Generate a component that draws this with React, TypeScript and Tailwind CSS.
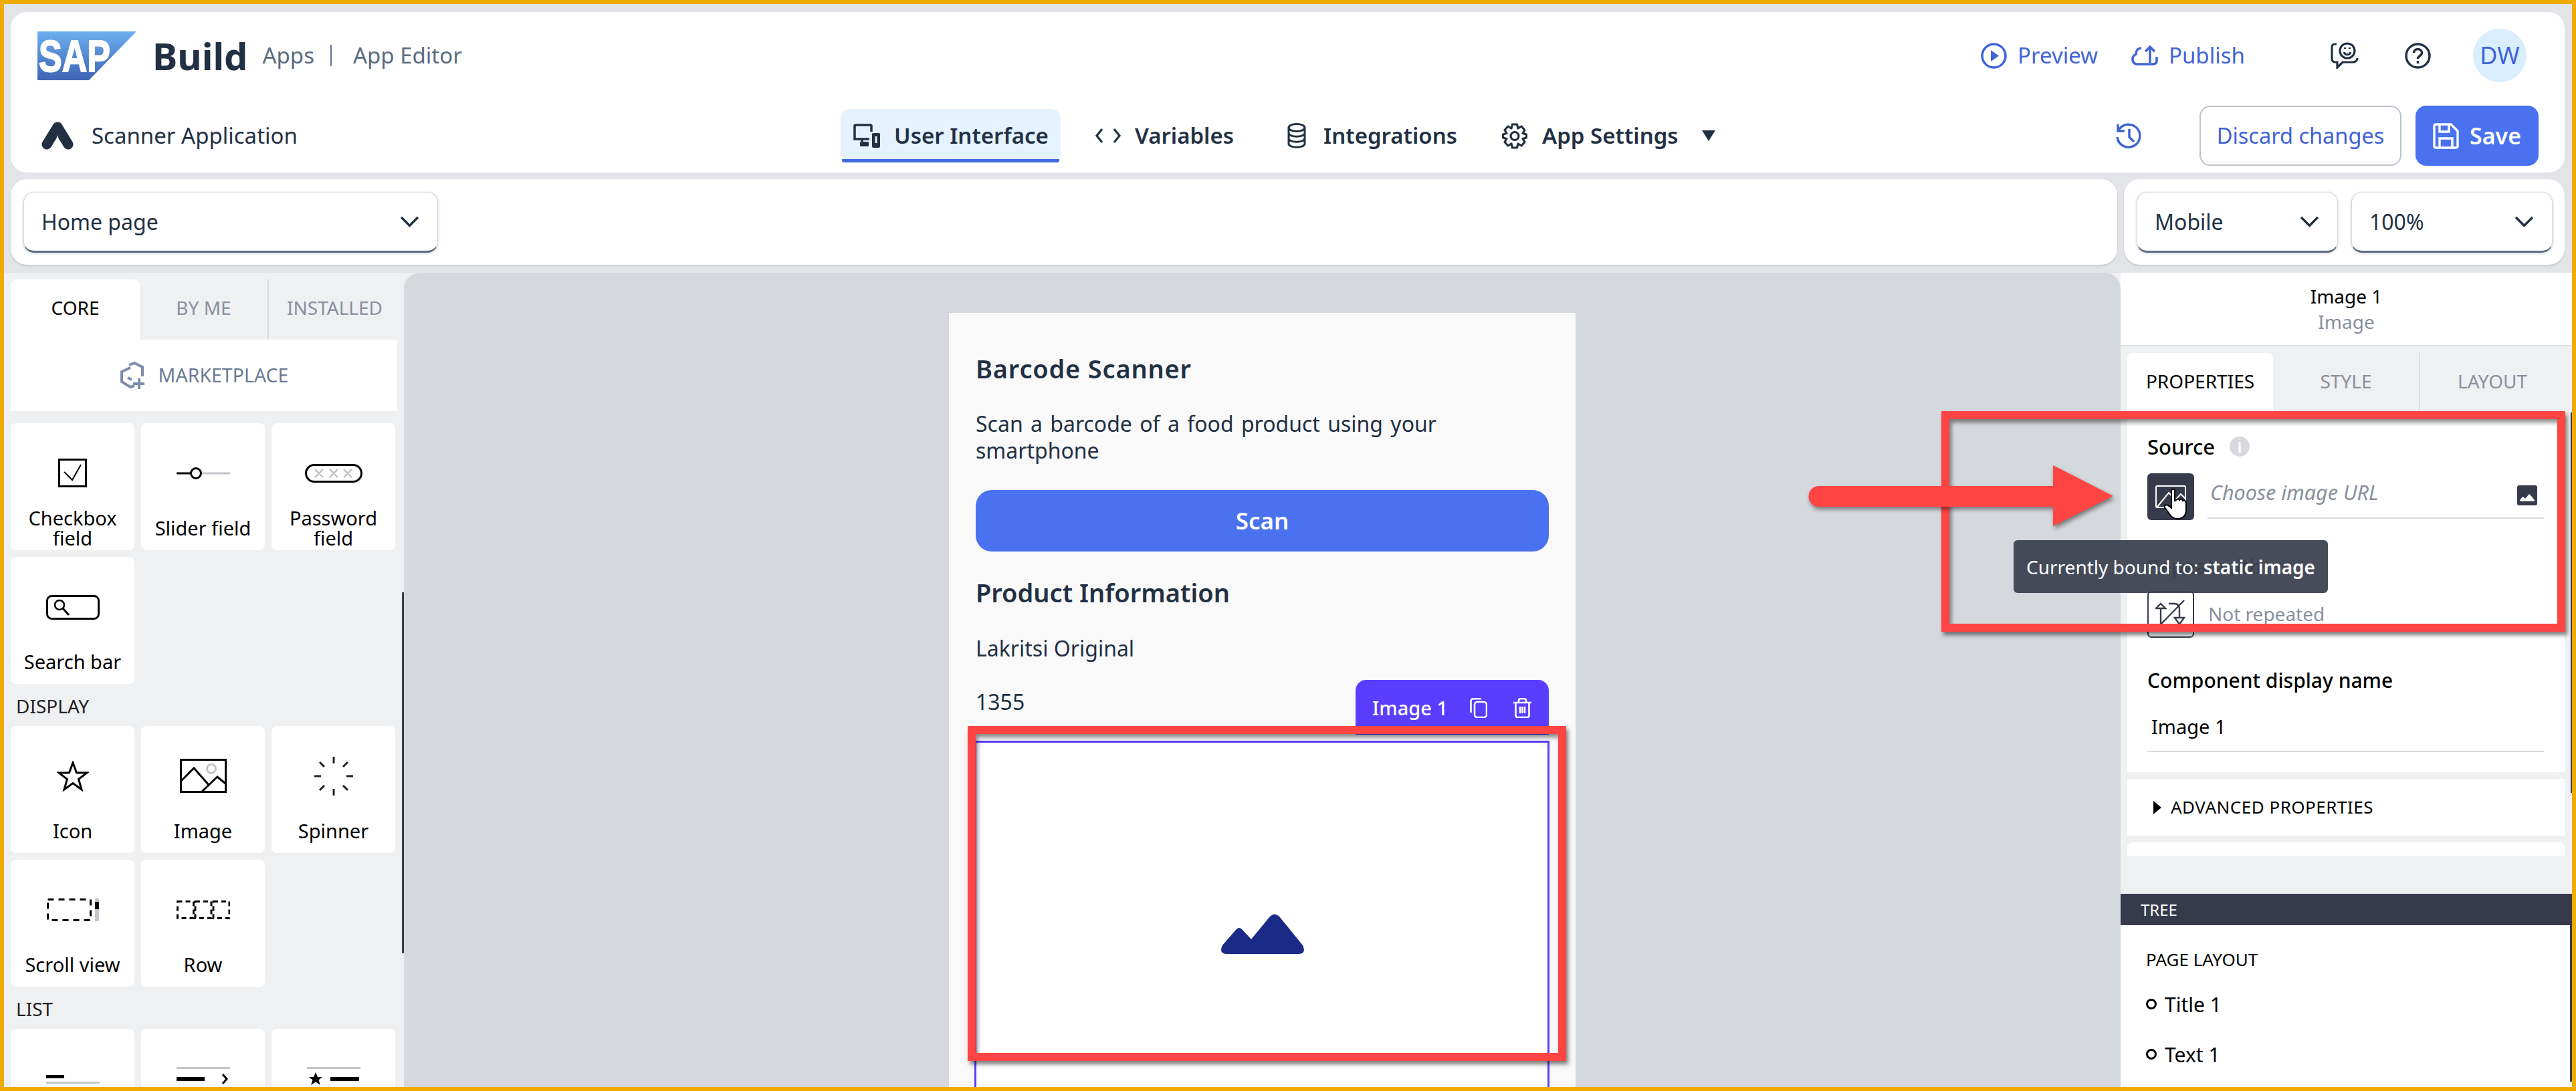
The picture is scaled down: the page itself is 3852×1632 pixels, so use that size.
import React from "react";

const INK = "#223044";

function Chevron() {
  return (
    <svg width="29" height="17" viewBox="0 0 29 17" fill="none" stroke="#223044" strokeWidth="3.4">
      <path d="M2 2 L14.5 14.5 L27 2" />
    </svg>
  );
}

function Select({ label, width }: { label: string; width: string }) {
  return (
    <div className={`flex h-[91px] items-center justify-between rounded-[16px] border border-b-[3px] border-[#d3d6dc] border-b-[#5b6b7e] bg-white pl-[26px] pr-[27px] shadow-[0_1px_4px_rgba(0,0,0,0.18)] ${width}`}>
      <span className="pt-[2px] text-[32px] text-[#223044]">{label}</span>
      <Chevron />
    </div>
  );
}

function Card({ label, children }: { label: React.ReactNode; children?: React.ReactNode }) {
  return (
    <div className="flex h-[190px] flex-col items-center rounded-[8px] bg-white">
      <div className="flex h-[126px] w-full items-center justify-center pt-[24px]">{children}</div>
      <div className="flex h-[62px] items-center text-center text-[29px] leading-[30px] text-black">{label}</div>
    </div>
  );
}

function SectionLabel({ text }: { text: string }) {
  return <div className="flex h-[63px] items-center pl-[8px] pt-[2px] text-[28px] text-[#222]">{text}</div>;
}

function SapLogo() {
  return (
    <svg width="148" height="73" viewBox="0 0 148 73">
      <defs>
        <linearGradient id="sapg" x1="0" y1="0" x2="0" y2="1">
          <stop offset="0" stopColor="#6cb0f0" />
          <stop offset="1" stopColor="#3f64b4" />
        </linearGradient>
      </defs>
      <polygon points="0,0 148,0 77,73 0,73" fill="url(#sapg)" />
      <text x="2" y="60" fontFamily="Liberation Sans" fontWeight="700" fontSize="66" fill="#fff" textLength="107" lengthAdjust="spacingAndGlyphs" stroke="#fff" strokeWidth="2">SAP</text>
    </svg>
  );
}

function AppMark() {
  return (
    <svg width="48" height="42" viewBox="0 0 48 42">
      <path d="M8 34 L24 8 L40 34" fill="none" stroke="#223044" strokeWidth="15" strokeLinecap="round" strokeLinejoin="round" />
      <path d="M24 20 L18 42 L30 42 Z" fill="#fff" />
    </svg>
  );
}

function Mountains({ className, fill = "#1b2a86" }: { className?: string; fill?: string }) {
  return (
    <svg className={className} viewBox="0 0 124 60">
      <path d="M2 47 L22 24 Q27 18 32 24 L45 38 L73 4 Q80 -3 87 4 L122 47 Q128 60 115 60 H9 Q-4 60 2 47 Z" fill={fill} />
    </svg>
  );
}

function MainArea() {
  return (
    <div className="flex min-h-0 flex-1 bg-[#eff0f2]">
      <LeftPanel />
      <div className="flex w-[2567px] justify-center overflow-hidden rounded-t-[24px] bg-[#d5d8dc] pt-[60px]">
        <Phone />
      </div>
      <RightPanel />
    </div>
  );
}

function LeftPanel() {
  return (
    <div className="relative w-[598px] overflow-hidden bg-[#eff0f2] pl-[10px] pt-[10px]">
      <div className="flex h-[90px] w-[588px] text-[28px]">
        <div className="flex w-[193px] items-start justify-center rounded-t-[8px] bg-white pt-[21px] text-black">CORE</div>
        <div className="flex w-[193px] items-start justify-center border-r-2 border-[#d8dade] pt-[21px] text-[#8a8f9c]">BY ME</div>
        <div className="flex w-[197px] items-start justify-center pt-[21px] text-[#8a8f9c]">INSTALLED</div>
      </div>
      <div className="flex h-[107px] w-[578px] items-center justify-center gap-[20px] bg-white text-[28.5px] text-[#6b7a94]">
        <svg width="38" height="42" viewBox="0 0 38 42" fill="none" stroke="#7d8dab" strokeWidth="4">
          <path d="M16 9 L3 15 V30 L16 38 L22 36" />
          <path d="M14 5 L22 2 L34 8 V22" />
          <path d="M12 24 L18 27" />
          <path d="M20 33 H37 M29 25 V41" />
        </svg>
        <span>MARKETPLACE</span>
      </div>
      <div className="mt-[18px] grid w-[575px] grid-cols-[185px_185px_185px] gap-[10px]">
        <Card label={<>Checkbox<br />field</>}>
          <svg width="44" height="44" viewBox="0 0 44 44" fill="none" stroke="#000">
            <rect x="1.5" y="1.5" width="40" height="40" strokeWidth="3" />
            <path d="M9 20 L21 32 L34 9" strokeWidth="2" />
          </svg>
        </Card>
        <Card label="Slider field">
          <svg width="80" height="20" viewBox="0 0 80 20" fill="none">
            <path d="M38 10 H80" stroke="#c4c5ca" strokeWidth="3" />
            <path d="M0 10 H22" stroke="#000" strokeWidth="3" />
            <circle cx="29" cy="10" r="7.5" stroke="#000" strokeWidth="3" />
          </svg>
        </Card>
        <Card label={<>Password<br />field</>}>
          <svg width="86" height="28" viewBox="0 0 86 28" fill="none">
            <rect x="1.5" y="1.5" width="83" height="25" rx="12.5" stroke="#000" strokeWidth="3" />
            <path d="M15 8 L27 20 M27 8 L15 20 M37 8 L49 20 M49 8 L37 20 M58 8 L70 20 M70 8 L58 20" stroke="#c4c5ca" strokeWidth="2.5" />
          </svg>
        </Card>
        <Card label="Search bar">
          <svg width="80" height="37" viewBox="0 0 80 37" fill="none" stroke="#000">
            <rect x="1.5" y="1.5" width="77" height="34" rx="7" strokeWidth="3" />
            <circle cx="20" cy="15" r="7" strokeWidth="2.5" />
            <path d="M25 20 L34 30" strokeWidth="3" />
          </svg>
        </Card>
      </div>
      <SectionLabel text="DISPLAY" />
      <div className="grid w-[575px] grid-cols-[185px_185px_185px] gap-[10px]">
        <Card label="Icon">
          <svg width="48" height="46" viewBox="0 0 48 46" fill="none" stroke="#000" strokeWidth="3">
            <path d="M24 3 L29.5 18 H45 L32.5 27.5 L37 43 L24 33.5 L11 43 L15.5 27.5 L3 18 H18.5 Z" />
          </svg>
        </Card>
        <Card label="Image">
          <svg width="70" height="52" viewBox="0 0 70 52" fill="none">
            <rect x="1.5" y="1.5" width="67" height="48" stroke="#000" strokeWidth="3" />
            <path d="M2 33 L21 14 L43 39 M33 49 L56 27 L68 37" stroke="#000" strokeWidth="3" />
            <circle cx="47" cy="15" r="6.5" stroke="#c4c5ca" strokeWidth="3" />
          </svg>
        </Card>
        <Card label="Spinner">
          <svg width="58" height="58" viewBox="0 0 58 58" stroke="#222" strokeWidth="3" fill="none">
            <path d="M29 0 V10 M29 48 V58 M0 29 H10 M48 29 H58 M8 8 L15 15 M50 8 L43 15 M8 50 L15 43 M50 50 L43 43" />
          </svg>
        </Card>
        <Card label="Scroll view">
          <svg width="78" height="34" viewBox="0 0 78 34" fill="none">
            <rect x="1.5" y="1.5" width="64" height="31" stroke="#000" strokeWidth="3" strokeDasharray="9 7" />
            <rect x="72" y="0" width="6" height="34" fill="#c4c5ca" />
            <rect x="72" y="5" width="6" height="11" fill="#000" />
          </svg>
        </Card>
        <Card label="Row">
          <svg width="80" height="28" viewBox="0 0 80 28" fill="none" stroke="#000" strokeWidth="3" strokeDasharray="7 5">
            <rect x="1.5" y="1.5" width="24" height="25" />
            <rect x="28" y="1.5" width="24" height="25" />
            <rect x="55" y="1.5" width="24" height="25" />
          </svg>
        </Card>
      </div>
      <SectionLabel text="LIST" />
      <div className="grid w-[575px] grid-cols-[185px_185px_185px] gap-[10px]">
        <Card label="">
          <svg className="mt-[16px]" width="80" height="28" viewBox="0 0 80 28">
            <rect x="0" y="0" width="27" height="5" fill="#000" />
            <rect x="0" y="10" width="80" height="3" fill="#c4c5ca" />
          </svg>
        </Card>
        <Card label="">
          <svg className="mt-[-6px]" width="80" height="30" viewBox="0 0 80 30" fill="none">
            <rect x="0" y="0" width="80" height="3" fill="#c4c5ca" />
            <rect x="0" y="15" width="42" height="6" fill="#000" />
            <path d="M69 11 L75 18 L69 25" stroke="#000" strokeWidth="3" />
          </svg>
        </Card>
        <Card label="">
          <svg className="mt-[-6px]" width="80" height="30" viewBox="0 0 80 30" fill="none">
            <rect x="0" y="0" width="80" height="3" fill="#c4c5ca" />
            <path d="M13 8 L16 15 H23 L17.5 19.5 L20 27 L13 22.5 L6 27 L8.5 19.5 L3 15 H10 Z" fill="#000" />
            <rect x="35" y="15" width="43" height="6" fill="#000" />
          </svg>
        </Card>
      </div>
      <div className="absolute right-0 top-[478px] h-[540px] w-[3px] bg-[#363a4b]" />
    </div>
  );
}

function Phone() {
  return (
    <div className="h-[1200px] w-[937px] bg-[#f9f9f9] px-[40px] pt-[60px] text-[#223044]">
      <div className="h-[46px] text-[38px] font-semibold leading-[46px] tracking-[0.8px]">Barcode Scanner</div>
      <p className="mt-[40px] text-[32px] leading-[40px] [word-spacing:3px]">
        Scan a barcode of a food product using your<br />smartphone
      </p>
      <div className="mt-[39px] flex h-[92px] items-center justify-center rounded-[24px] bg-[#4a72f0] text-[35px] font-semibold text-white">Scan</div>
      <div className="mt-[38px] h-[46px] text-[38px] font-semibold leading-[46px]">Product Information</div>
      <div className="mt-[41px] h-[40px] text-[32px] leading-[40px]">Lakritsi Original</div>
      <div className="mt-[40px] h-[40px] text-[32px] leading-[40px]">1355</div>
      <div className="relative ml-[-2px] mr-[-1px] mt-[38px] h-[600px] border-[3px] border-[#5a3dff] pl-[2px]">
        <div className="absolute right-[-2px] top-[-94px] flex h-[82px] w-[289px] items-center rounded-t-[16px] bg-[#5a3dff] pl-[25px] pt-[2px] text-white">
          <span className="w-[146px] text-[29px] font-medium">Image 1</span>
          <svg width="26" height="30" viewBox="0 0 26 30" fill="none" stroke="#fff" strokeWidth="2.6">
            <path d="M1.5 22 V5 C1.5 2.5 3 1.3 5 1.3 H17" />
            <rect x="7" y="6" width="18" height="23" rx="4" />
          </svg>
          <svg className="ml-[39px]" width="27" height="30" viewBox="0 0 27 30" fill="none" stroke="#fff" strokeWidth="2.6">
            <path d="M0 7 H27 M8 7 V4 C8 2 9 1.3 11 1.3 H16 C18 1.3 19 2 19 4 V7 M3.5 7 V26 C3.5 28 5 29 6.5 29 H20.5 C22 29 23.5 28 23.5 26 V7 M10 13 V23 M13.5 13 V23 M17 13 V23" />
          </svg>
        </div>
        <div className="flex h-full justify-center rounded-[20px] bg-white pt-[256px]">
          <Mountains className="h-[60px] w-[124px]" />
        </div>
      </div>
    </div>
  );
}

function RightPanel() {
  return (
    <div className="relative flex w-[675px] flex-col bg-[#eff0f2]">
      <div className="flex h-[110px] flex-col items-center border-b-2 border-[#dcdde1] bg-white pt-[16px]">
        <div className="text-[28px] leading-[38px] text-black">Image 1</div>
        <div className="text-[28px] leading-[38px] text-[#8a8f9c]">Image</div>
      </div>
      <div className="mt-[10px] flex h-[87px] pl-[10px] text-[28px]">
        <div className="flex w-[218px] justify-center rounded-t-[8px] bg-white pt-[21px] text-black">PROPERTIES</div>
        <div className="flex w-[220px] justify-center border-r-2 border-[#dcdde1] pt-[21px] text-[#8a8f9c]">STYLE</div>
        <div className="flex w-[216px] justify-center pt-[21px] text-[#8a8f9c]">LAYOUT</div>
      </div>
      <div className="ml-[10px] h-[540px] w-[654px] bg-white pl-[30px] pr-[31px] pt-[33px]">
        <div className="flex h-[40px] items-center gap-[22px] text-[31px] font-medium text-black">
          Source
          <span className="flex h-[30px] w-[30px] items-center justify-center rounded-full bg-[#d8d9de] text-[22px] font-bold text-white">i</span>
        </div>
        <div className="mt-[20px] flex h-[70px] items-start">
          <div className="flex h-[70px] w-[70px] items-center justify-center rounded-[6px] bg-[#363a4b]">
            <svg width="46" height="34" viewBox="0 0 46 34" fill="none" stroke="#fff" strokeWidth="2">
              <rect x="1" y="1" width="44" height="32" rx="2" />
              <path d="M3 32 L20 11 L30 22 M30 22 L38 13 L45 20" />
            </svg>
          </div>
          <div className="ml-[20px] flex h-[68px] flex-1 items-center justify-between border-b-2 border-[#d8d9de] pl-[4px] pr-[10px]">
            <span className="pb-[8px] text-[30.5px] italic text-[#8a8f9c]">Choose image URL</span>
            <div className="flex h-[30px] w-[30px] items-end justify-center rounded-[3px] bg-[#363a4b] pb-[6px]">
              <Mountains className="h-[11px] w-[22px]" fill="#fff" />
            </div>
          </div>
        </div>
        <div className="mt-[49px] flex h-[40px] items-center text-[30px] font-medium text-black">Repeat with</div>
        <div className="mt-[17px] flex h-[70px] items-center">
          <div className="flex h-[70px] w-[70px] items-center justify-center rounded-[6px] border-2 border-[#363a4b]">
            <svg width="46" height="46" viewBox="0 0 46 46" fill="none" stroke="#363a4b" strokeWidth="2.4">
              <path d="M8 14 V38 M1 14 L8 7 L15 14 Z M20 7 H28 C33 7 36 10 36 15 V28 M29 28 L36 38 L43 28 Z M43 2 L6 40" />
            </svg>
          </div>
          <span className="ml-[21px] pb-[3px] text-[28px] text-[#8a8f9c]">Not repeated</span>
        </div>
        <div className="mt-[43px] flex h-[40px] items-center text-[30px] font-medium text-black">Component display name</div>
        <div className="mt-[30px] flex h-[58px] items-start border-b-2 border-[#d8d9de] pl-[6px] text-[29px] leading-[40px] text-black">Image 1</div>
      </div>
      <div className="ml-[10px] mt-[10px] flex h-[85px] w-[654px] items-center bg-white pl-[39px] text-[26px] tracking-[0.5px] text-black">
        <span className="mr-[14px] h-0 w-0 border-y-[10px] border-l-[12px] border-y-transparent border-l-black" />
        ADVANCED PROPERTIES
      </div>
      <div className="ml-[10px] mt-[10px] h-[20px] w-[654px] rounded-t-[8px] bg-white" />
      <div className="mt-[57px] flex h-[47px] items-center bg-[#363a4b] pl-[30px] text-[24px] text-white">TREE</div>
      <div className="flex-1 bg-white pl-[38px] pt-[31px] text-black">
        <div className="flex h-[40px] items-center text-[26px]">PAGE LAYOUT</div>
        <div className="mt-[27px] flex h-[40px] items-center gap-[12px] text-[30px]">
          <span className="h-[16px] w-[16px] rounded-full border-[3px] border-black" />
          Title 1
        </div>
        <div className="mt-[35px] flex h-[40px] items-center gap-[12px] text-[30px]">
          <span className="h-[16px] w-[16px] rounded-full border-[3px] border-black" />
          Text 1
        </div>
      </div>
      <div className="absolute right-0 top-[209px] h-[569px] w-[2px] bg-[#363a4b]" />
      <div className="absolute bottom-[8px] right-0 h-[234px] w-[3px] bg-[#363a4b]" />
    </div>
  );
}

function Header() {
  return (
    <div className="ml-[10px] mr-[11px] mt-[12px] h-[240px] rounded-[24px] bg-white">
      <div className="flex h-[130px] items-center pl-[40px] pr-[57px]">
        <SapLogo />
        <span className="ml-[24px] text-[56px] font-bold text-[#223044]">Build</span>
        <span className="ml-[22px] text-[33px] text-[#5b6b82]">Apps</span>
        <span className="ml-[24px] h-[32px] w-[2px] bg-[#5b7596]" />
        <span className="ml-[32px] text-[33px] text-[#5b6b82]">App Editor</span>
        <div className="ml-auto flex items-center text-[33px] text-[#3f63d8]">
          <svg width="39" height="39" viewBox="0 0 39 39" fill="none">
            <circle cx="19.5" cy="19.5" r="17.5" stroke="#3f63d8" strokeWidth="3.5" />
            <path d="M15 11 L27 19.5 L15 28 Z" fill="#3f63d8" />
          </svg>
          <span className="ml-[16px] w-[122px] whitespace-nowrap">Preview</span>
          <svg className="ml-[48px]" width="40" height="30" viewBox="0 0 40 30" fill="none" stroke="#3f63d8" strokeWidth="3.5">
            <path d="M15 4 C9 4 7 9 7 13 C3 15 1.5 18 2 22 C3 26 6 28 9 28 H32 C36 28 38 26 38 23 V17" />
            <path d="M28 26 V3 M21 9 L28 2 L35 9" />
          </svg>
          <span className="ml-[16px] w-[112px] whitespace-nowrap">Publish</span>
          <svg className="ml-[130px]" width="42" height="40" viewBox="0 0 42 40" fill="none" stroke="#223044" strokeWidth="3.2">
            <path d="M9 3 H6 C3 3 2 5 2 8 V25 C2 28 4 30 7 30 H10 V38 L18 30 H33 C37 30 40 28 40 24" />
            <circle cx="25" cy="13" r="11" />
            <path d="M20 15 C22 20 28 20 30 15" />
            <path d="M21.5 8 V10 M28.5 8 V10" />
          </svg>
          <svg className="ml-[69px]" width="39" height="39" viewBox="0 0 39 39" fill="none" stroke="#223044" strokeWidth="3.5">
            <circle cx="19.5" cy="19.5" r="17.5" />
            <path d="M13.5 15 C13.5 7.5 25.5 7.5 25.5 15 C25.5 19.5 19.5 19.5 19.5 24" />
            <path d="M19.5 27 V31" />
          </svg>
          <div className="ml-[63px] flex h-[80px] w-[80px] items-center justify-center rounded-full bg-[#dbeeff] text-[36px]">DW</div>
        </div>
      </div>
      <div className="flex h-[110px] items-center pl-[46px] pr-[39px]">
        <div className="flex w-[1195px] items-center gap-[27px]">
          <AppMark />
          <span className="text-[33px] text-[#223044]">Scanner Application</span>
        </div>
        <div className="relative flex h-[80px] w-[329px] items-center rounded-[14px] bg-[#e5f2ff] pl-[19px] text-[33px] font-semibold text-[#223044]">
          <svg width="40" height="36" viewBox="0 0 40 36" fill="none">
            <path d="M27 12 V3 C27 2 26 2 25 2 H4 C3 2 2 2 2 3 V23 H24" stroke={INK} strokeWidth="3.5" />
            <path d="M13 23 V29" stroke={INK} strokeWidth="3.5" />
            <rect x="10" y="27" width="13" height="7" rx="1.5" fill={INK} />
            <rect x="28" y="14" width="12" height="22" rx="2" fill={INK} />
            <rect x="32.5" y="19" width="3" height="10" fill="#e5f2ff" />
          </svg>
          <span className="ml-[21px] whitespace-nowrap">User Interface</span>
          <div className="absolute inset-x-[2px] bottom-0 h-[5px] rounded-b-[3px] bg-[#4169e1]" />
        </div>
        <div className="ml-[51px] flex items-center text-[33px] font-semibold text-[#223044]">
          <svg width="40" height="24" viewBox="0 0 40 24" fill="none" stroke={INK} strokeWidth="3.2">
            <path d="M11 2 L3 12 L11 22 M29 2 L37 12 L29 22" />
          </svg>
          <span className="ml-[20px] w-[151px] whitespace-nowrap">Variables</span>
          <svg className="ml-[77px]" width="28" height="38" viewBox="0 0 28 38" fill="none" stroke={INK} strokeWidth="3">
            <ellipse cx="14" cy="7" rx="12" ry="5.5" />
            <path d="M2 7 V31 C2 38 26 38 26 31 V7 M2 15 C2 22 26 22 26 15 M2 23 C2 30 26 30 26 23" />
          </svg>
          <span className="ml-[26px] w-[196px] whitespace-nowrap">Integrations</span>
          <svg className="ml-[71px]" width="38" height="39" viewBox="0 0 38 39" fill="none" stroke={INK} strokeWidth="3.2" strokeLinejoin="round">
            <path d="M15.5 2 H22.5 L24 8 L29 5 L34 10.5 L31 15.5 L36.5 17 V22 L31 23.5 L34 28.5 L29 34 L24 31 L22.5 37 H15.5 L14 31 L9 34 L4 28.5 L7 23.5 L1.5 22 V17 L7 15.5 L4 10.5 L9 5 L14 8 Z" />
            <circle cx="19" cy="19.5" r="6" />
          </svg>
          <span className="ml-[22px] w-[210px] whitespace-nowrap">App Settings</span>
          <span className="ml-[29px] h-0 w-0 border-x-[10px] border-t-[16px] border-x-transparent border-t-[#223044]" />
        </div>
        <div className="ml-auto flex items-center">
          <svg width="40" height="39" viewBox="0 0 40 39" fill="none" stroke="#3f63d8" strokeWidth="3.5">
            <path d="M3 2 V12 H13 M4 11 A17 17 0 1 1 2 21" />
            <path d="M20 9 V21 L27 28" />
          </svg>
          <div className="ml-[85px] flex h-[90px] w-[302px] items-center justify-center rounded-[16px] border-2 border-[#bcc3ca] text-[32.5px] text-[#3f63d8]">Discard changes</div>
          <div className="ml-[21px] flex h-[90px] w-[184px] items-center justify-center gap-[16px] rounded-[16px] bg-[#4a72f0] text-[34px] font-semibold text-white">
            <svg width="39" height="39" viewBox="0 0 39 39" fill="none" stroke="#fff" strokeWidth="3.4">
              <path d="M4 2 H27 L37 12 V35 C37 36 36 37 35 37 H4 C3 37 2 36 2 35 V4 C2 3 3 2 4 2 Z" />
              <path d="M10 3 V13 H24 V3 M10 37 V23 H29 V37" />
            </svg>
            Save
          </div>
        </div>
      </div>
    </div>
  );
}

export default function App() {
  return (
    <div className="relative flex h-[1632px] w-[3852px] flex-col overflow-hidden border-[6px] border-[#f0ab00] bg-[#e3e4e8] font-['Noto_Sans',sans-serif]">
      <Header />
      <div className="mt-[10px] flex h-[128px] gap-[10px] pl-[10px] pr-[11px]">
        <div className="flex h-[128px] w-[3150px] items-center rounded-[24px] bg-white pl-[19px] shadow-[0_2px_3px_rgba(0,0,0,0.12)]">
          <Select label="Home page" width="w-[620px]" />
        </div>
        <div className="flex h-[128px] flex-1 items-center gap-[20px] rounded-[24px] bg-white pl-[19px] shadow-[0_2px_3px_rgba(0,0,0,0.12)]">
          <Select label="Mobile" width="w-[301px]" />
          <Select label="100%" width="w-[301px]" />
        </div>
      </div>
      <div className="mt-[12px] flex min-h-0 flex-1">
        <MainArea />
      </div>

      {/* annotation overlays */}
      <div className="absolute left-[1441px] top-[1080px] h-[501px] w-[895px] border-[12px] border-[#ff4444] shadow-[3px_5px_6px_rgba(0,0,0,0.5),inset_3px_5px_6px_rgba(0,0,0,0.45)]" />
      <div className="absolute left-[2897px] top-[609px] h-[330px] w-[933px] border-[12px] border-[#ff4444] shadow-[3px_5px_6px_rgba(0,0,0,0.5),inset_3px_5px_6px_rgba(0,0,0,0.45)]" />
      <svg className="absolute left-[2698px] top-[690px] drop-shadow-[2px_4px_3px_rgba(0,0,0,0.45)]" width="456" height="91" viewBox="0 0 456 91">
        <path d="M16 31 H366 V0 L456 46 L366 91 V62 H16 A15.5 15.5 0 0 1 16 31 Z" fill="#ff4444" />
      </svg>
      <div className="absolute left-[3005px] top-[802px] flex h-[79px] w-[470px] items-center justify-center whitespace-nowrap rounded-[6px] bg-[#3d4251]/95 text-[28px] text-white">
        <span>Currently bound to:&nbsp;<span className="font-semibold">static image</span></span>
      </div>
      <svg className="absolute left-[3230px] top-[725px]" width="34" height="46" viewBox="0 0 34 46">
        <path d="M11 3 C11 0 16 0 16 3 V18 L18 17 C19 15 22 15 23 17 C24 15 27 15 28 18 C30 17 33 18 33 21 V32 C33 40 28 45 20 45 C13 45 10 41 6 35 L1 28 C0 25 3 23 6 25 L11 29 Z" fill="#fff" stroke="#000" strokeWidth="2" />
      </svg>
    </div>
  );
}
